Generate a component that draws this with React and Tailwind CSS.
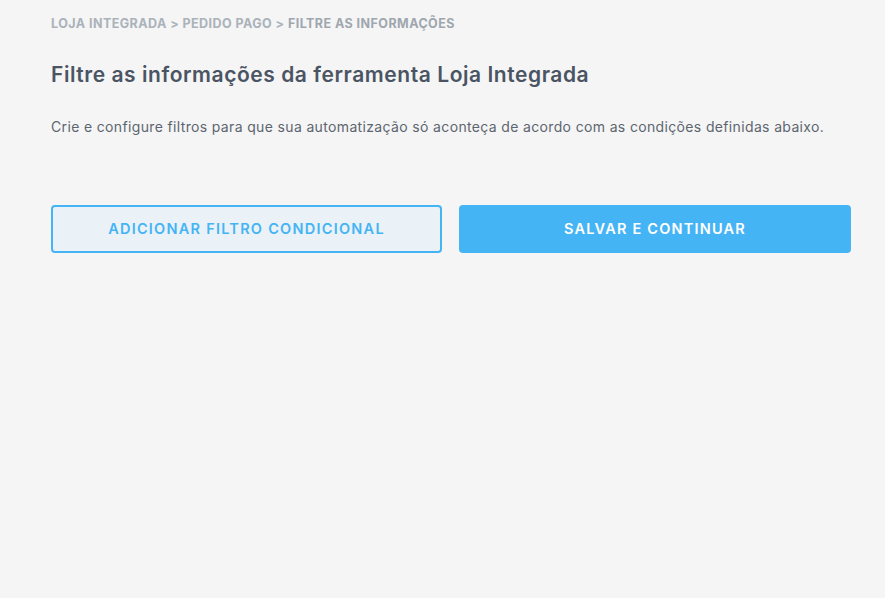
export default function App() {
  return (
    <div className="min-h-[598px] w-full bg-[#f5f5f5] pl-[51px] pr-[34px] pt-[16px] font-['Inter','Open_Sans',sans-serif]">
      <div className="text-[12.5px] font-bold leading-[16px] tracking-[0.45px] text-[#aab2ba]">
        LOJA INTEGRADA &gt; PEDIDO PAGO &gt; <span className="text-[#9ea7b0]">FILTRE AS INFORMAÇÕES</span>
      </div>
      <h1 className="mt-[29px] text-[21px] font-semibold leading-[28px] tracking-[0.55px] text-[#4a5463]">
        Filtre as informações da ferramenta Loja Integrada
      </h1>
      <p className="mt-[28px] text-[14px] leading-[20px] tracking-[0.35px] text-[#5d6570]">
        Crie e configure filtros para que sua automatização só aconteça de acordo com as condições definidas abaixo.
      </p>
      <div className="mt-[68px] flex gap-[17px]">
        <button className="flex h-[48px] w-[391px] items-center justify-center rounded-[4px] border-2 border-[#45b4f5] bg-[#eaf2f7] text-[14.5px] font-semibold tracking-[1.25px] text-[#45b4f5]">
          ADICIONAR FILTRO CONDICIONAL
        </button>
        <button className="flex h-[48px] w-[392px] items-center justify-center rounded-[4px] bg-[#45b4f5] text-[14.5px] font-semibold tracking-[1.2px] text-white">
          SALVAR E CONTINUAR
        </button>
      </div>
    </div>
  )
}
